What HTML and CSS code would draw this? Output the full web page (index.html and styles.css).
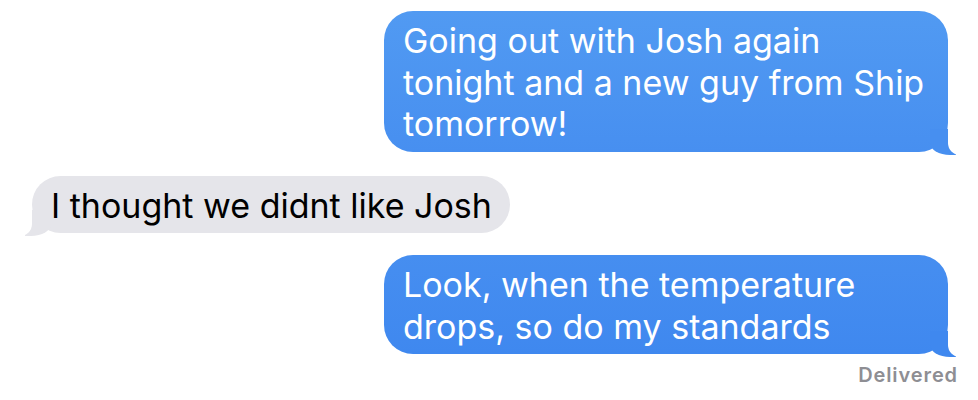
FILE: index.html
```html
<!DOCTYPE html>
<html lang="en">

<head>
  <meta charset="UTF-8">
  <meta name="viewport" content="width=device-width, initial-scale=1.0">
  <title>Messages</title>
  <link rel="stylesheet" href="styles.css">
</head>

<body>
  <div class="thread">
    <div class="bubble sent first">Going out with Josh again tonight and a new guy from Ship tomorrow!</div>
    <div class="bubble received">I thought we didnt like Josh</div>
    <div class="bubble sent last">Look, when the temperature drops, so do my standards</div>
    <div class="status">Delivered</div>
  </div>
</body>

</html>
```

FILE: styles.css
```css
/* General Reset */
* {
  margin: 0;
  padding: 0;
  box-sizing: border-box;
}

body {
  font-family: 'Inter', 'Noto Sans', sans-serif;
  background-color: #fff;
  color: #000;
}

/* Message thread */
.thread {
  display: flex;
  flex-direction: column;
  padding: 11px 30px 0 32px;
}

.bubble {
  position: relative;
  font-size: 34px;
  line-height: 41.5px;
  padding: 9px 18px 7px 19px;
  border-radius: 29px;
  max-width: 564px;
}

/* Blue outgoing bubbles */
.sent {
  align-self: flex-end;
  width: 564px;
  color: #fff;
  background: linear-gradient(#519af2, #478ff0);
}

.sent.last {
  background: linear-gradient(#468ef0, #3f88ef);
}

.sent::before {
  content: "";
  position: absolute;
  bottom: -3px;
  right: -8px;
  width: 26px;
  height: 26px;
  background-color: #478ff0;
  border-bottom-left-radius: 20px 12px;
}

.sent.last::before {
  background-color: #3f88ef;
}

.sent::after {
  content: "";
  position: absolute;
  bottom: -3px;
  right: -14px;
  width: 14px;
  height: 28px;
  background-color: #fff;
  border-bottom-left-radius: 12px;
}

/* Grey incoming bubble */
.received {
  align-self: flex-start;
  background-color: #e5e5ea;
  margin: 24px 0 22px;
}

.received::before {
  content: "";
  position: absolute;
  bottom: -3px;
  left: -7px;
  width: 26px;
  height: 26px;
  background-color: #e5e5ea;
  border-bottom-right-radius: 20px 12px;
}

.received::after {
  content: "";
  position: absolute;
  bottom: -3px;
  left: -14px;
  width: 14px;
  height: 28px;
  background-color: #fff;
  border-bottom-right-radius: 12px;
}

/* Delivered label */
.status {
  align-self: flex-end;
  margin: 9px -10px 0 0;
  font-size: 20px;
  font-weight: 600;
  letter-spacing: 0.9px;
  color: #8e8e93;
}
```
